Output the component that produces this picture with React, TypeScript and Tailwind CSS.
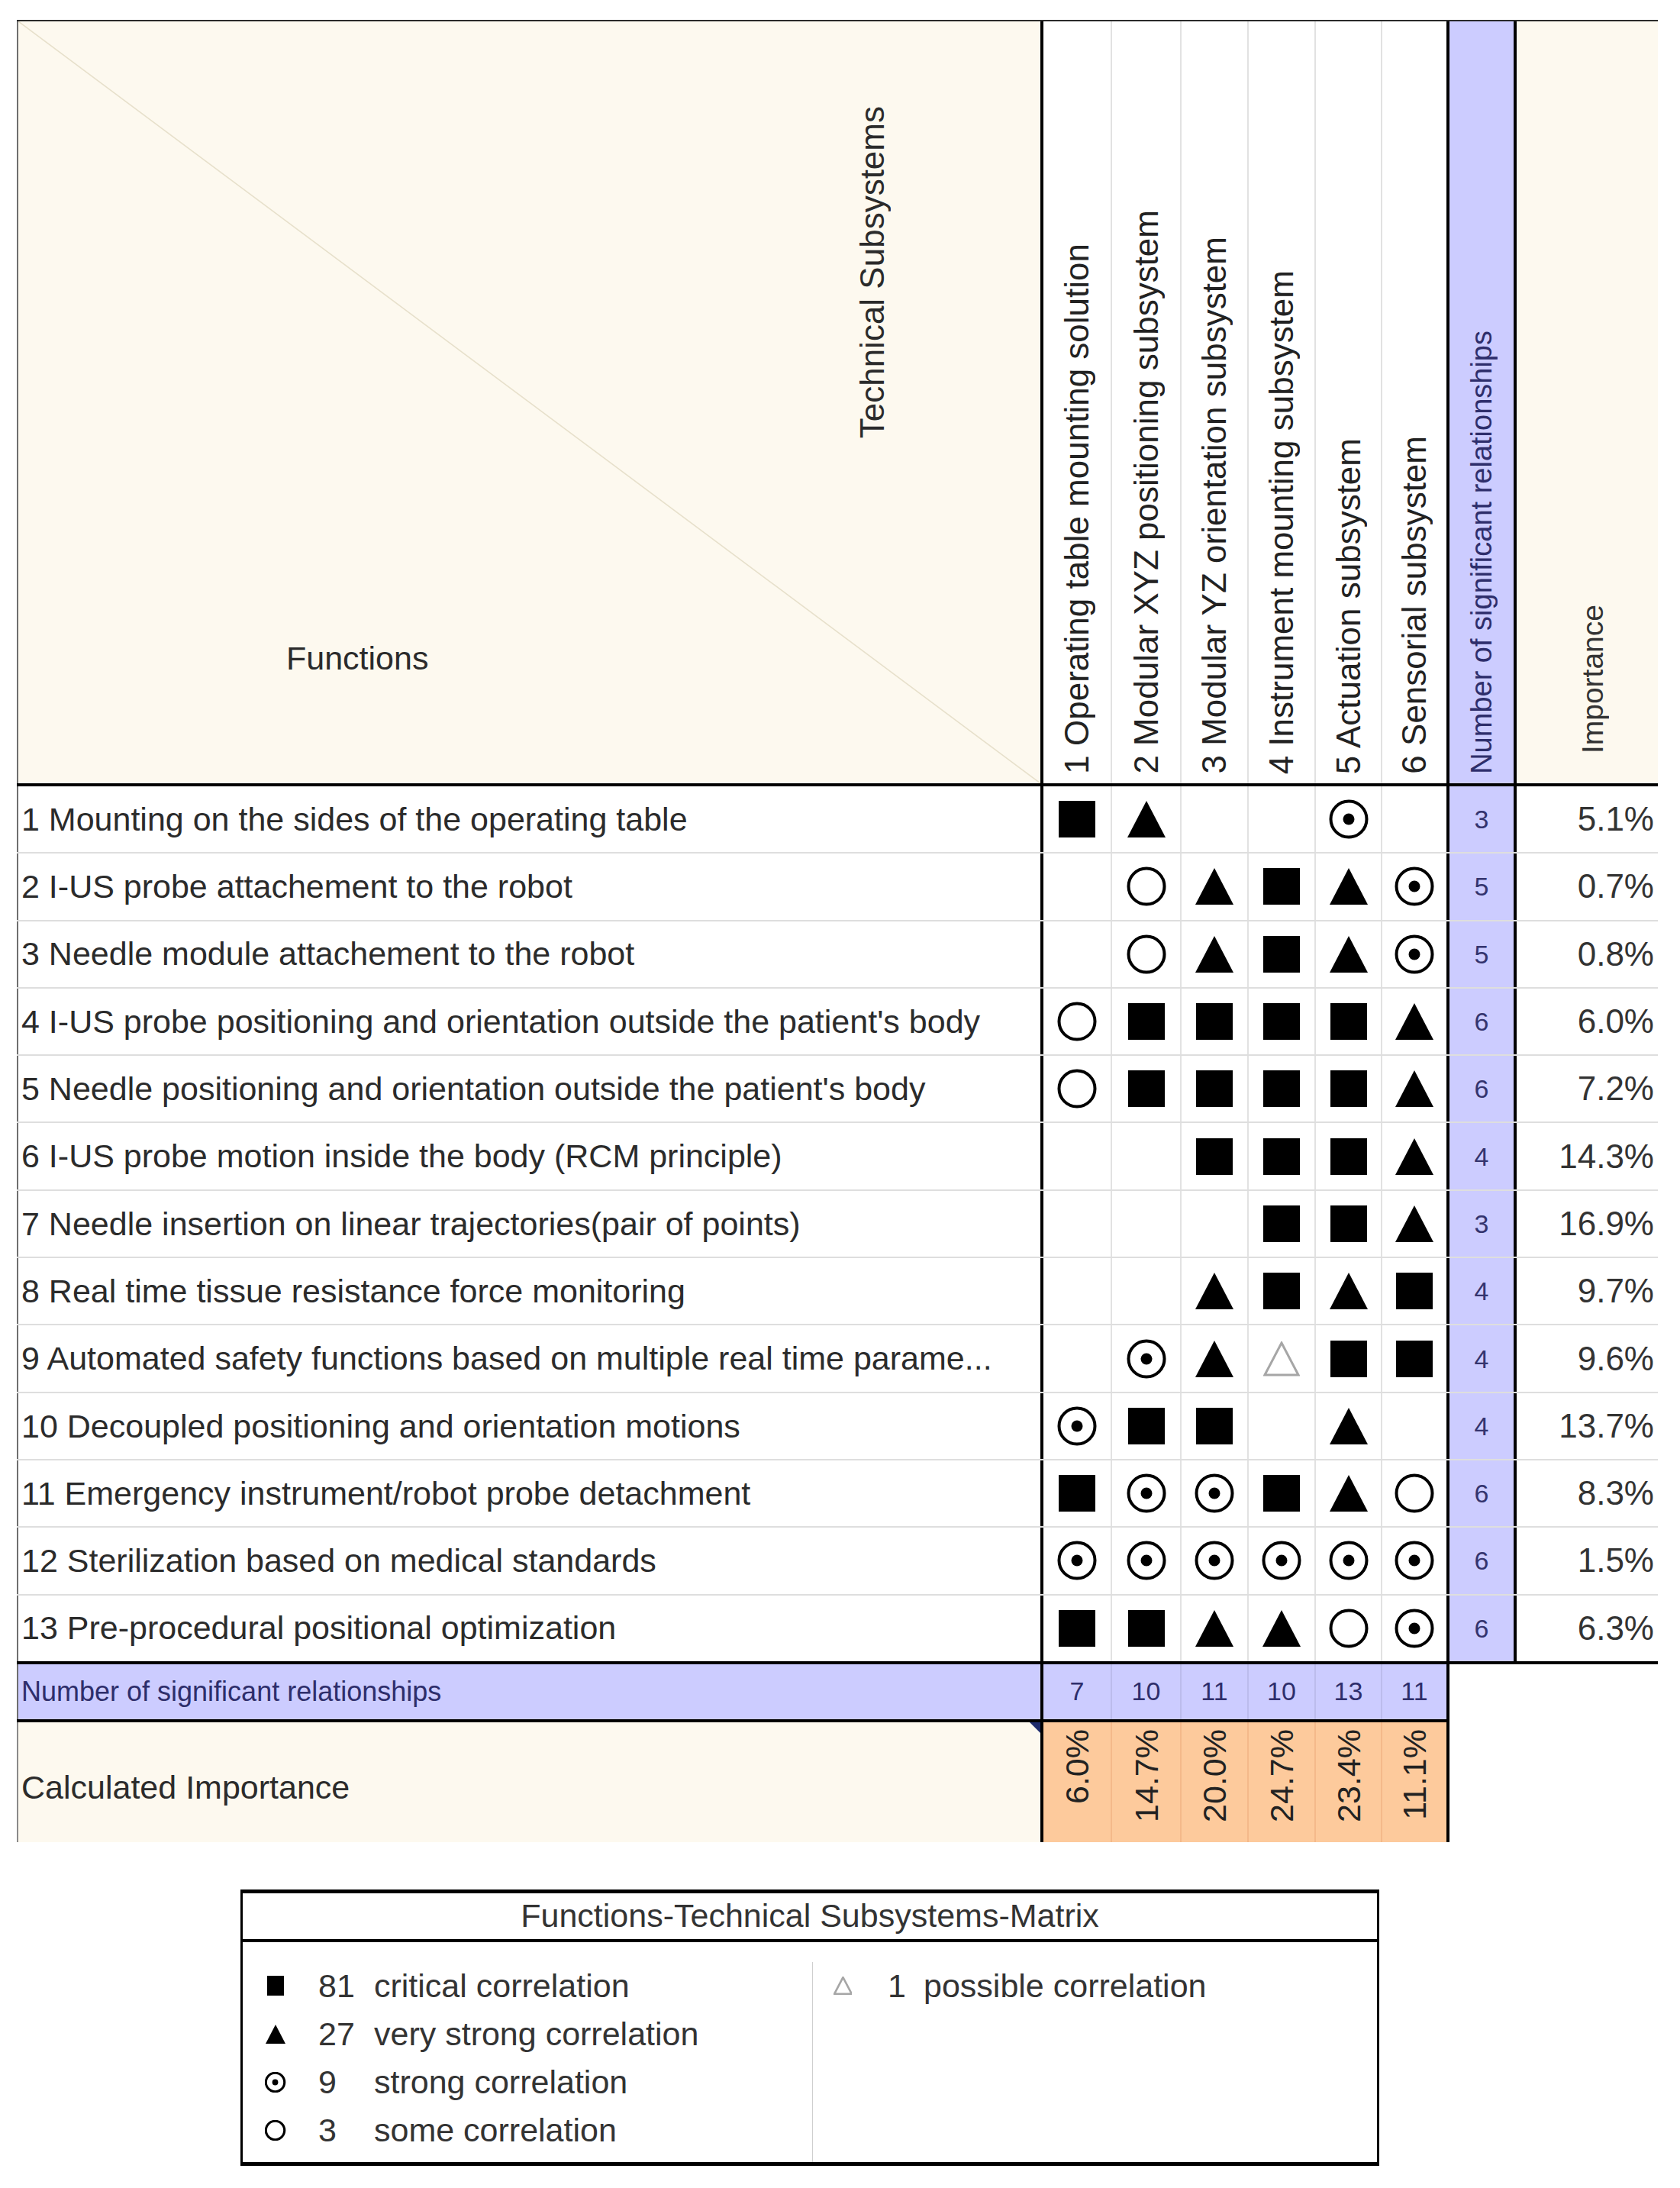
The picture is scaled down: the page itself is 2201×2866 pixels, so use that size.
import React from "react";

type Sym = "sq" | "tri" | "dot" | "ring" | "ptri" | "";

const rows: { label: string; cells: Sym[]; n: number; imp: string }[] = [
  { label: "1 Mounting on the sides of the operating table", cells: ["sq", "tri", "", "", "dot", ""], n: 3, imp: "5.1%" },
  { label: "2 I-US probe attachement to the robot", cells: ["", "ring", "tri", "sq", "tri", "dot"], n: 5, imp: "0.7%" },
  { label: "3 Needle module attachement to the robot", cells: ["", "ring", "tri", "sq", "tri", "dot"], n: 5, imp: "0.8%" },
  { label: "4 I-US probe positioning and orientation outside the patient's body", cells: ["ring", "sq", "sq", "sq", "sq", "tri"], n: 6, imp: "6.0%" },
  { label: "5 Needle positioning and orientation outside the patient's body", cells: ["ring", "sq", "sq", "sq", "sq", "tri"], n: 6, imp: "7.2%" },
  { label: "6 I-US probe motion inside the body (RCM principle)", cells: ["", "", "sq", "sq", "sq", "tri"], n: 4, imp: "14.3%" },
  { label: "7 Needle insertion on linear trajectories(pair of points)", cells: ["", "", "", "sq", "sq", "tri"], n: 3, imp: "16.9%" },
  { label: "8 Real time tissue resistance force monitoring", cells: ["", "", "tri", "sq", "tri", "sq"], n: 4, imp: "9.7%" },
  { label: "9 Automated safety functions based on multiple real time parame...", cells: ["", "dot", "tri", "ptri", "sq", "sq"], n: 4, imp: "9.6%" },
  { label: "10 Decoupled positioning and orientation motions", cells: ["dot", "sq", "sq", "", "tri", ""], n: 4, imp: "13.7%" },
  { label: "11 Emergency instrument/robot probe detachment", cells: ["sq", "dot", "dot", "sq", "tri", "ring"], n: 6, imp: "8.3%" },
  { label: "12 Sterilization based on medical standards", cells: ["dot", "dot", "dot", "dot", "dot", "dot"], n: 6, imp: "1.5%" },
  { label: "13 Pre-procedural positional optimization", cells: ["sq", "sq", "tri", "tri", "ring", "dot"], n: 6, imp: "6.3%" },
];

const subsystems = [
  "1 Operating table mounting solution",
  "2 Modular XYZ positioning subsystem",
  "3 Modular YZ orientation subsystem",
  "4 Instrument mounting subsystem",
  "5 Actuation subsystem",
  "6 Sensorial subsystem",
];

const totals = ["7", "10", "11", "10", "13", "11"];
const calculated = ["6.0%", "14.7%", "20.0%", "24.7%", "23.4%", "11.1%"];

// column widths incl. their left border
const gridCols = [
  "w-[92px] border-l-4 border-black",
  "w-[91px] border-l-2 border-[#e2e2e2]",
  "w-[88px] border-l-2 border-[#e2e2e2]",
  "w-[88px] border-l-2 border-[#e2e2e2]",
  "w-[87px] border-l-2 border-[#e2e2e2]",
  "w-[86px] border-l-2 border-[#e2e2e2]",
];
const blueCols = [
  "w-[92px] border-l-4 border-black",
  "w-[91px] border-l-2 border-[#bcbcec]",
  "w-[88px] border-l-2 border-[#bcbcec]",
  "w-[88px] border-l-2 border-[#bcbcec]",
  "w-[87px] border-l-2 border-[#bcbcec]",
  "w-[86px] border-l-2 border-[#bcbcec]",
];
const orangeCols = [
  "w-[92px] border-l-4 border-black",
  "w-[91px] border-l-2 border-[#f4b98a]",
  "w-[88px] border-l-2 border-[#f4b98a]",
  "w-[88px] border-l-2 border-[#f4b98a]",
  "w-[87px] border-l-2 border-[#f4b98a]",
  "w-[86px] border-l-2 border-[#f4b98a]",
];

const vertical = "[writing-mode:vertical-rl] rotate-180 whitespace-nowrap";

function Mark({ s, small }: { s: Sym; small?: boolean }) {
  const k = small ? 0.52 : 1;
  if (s === "sq") return <div className={small ? "w-[22px] h-[26px] bg-black" : "w-[48px] h-[48px] bg-black"} />;
  if (s === "tri")
    return (
      <svg width={50 * k} height={48 * k} viewBox="0 0 50 48">
        <polygon points="25,0 50,48 0,48" fill="#000" />
      </svg>
    );
  if (s === "dot")
    return (
      <svg width={52 * k} height={52 * k} viewBox="0 0 52 52">
        <circle cx="26" cy="26" r="23.5" fill="none" stroke="#000" strokeWidth={small ? 6 : 4} />
        <circle cx="26" cy="26" r="7.5" fill="#000" />
      </svg>
    );
  if (s === "ring")
    return (
      <svg width={52 * k} height={52 * k} viewBox="0 0 52 52">
        <circle cx="26" cy="26" r="23.5" fill="none" stroke="#000" strokeWidth={small ? 6 : 4} />
      </svg>
    );
  if (s === "ptri")
    return (
      <svg width={48 * k} height={46 * k} viewBox="0 0 48 46">
        <polygon points="24,2 46,44 2,44" fill="none" stroke="#a6a6a6" strokeWidth={small ? 5 : 3} />
      </svg>
    );
  return null;
}

function Legend() {
  const left: { s: Sym; n: string; t: string }[] = [
    { s: "sq", n: "81", t: "critical correlation" },
    { s: "tri", n: "27", t: "very strong correlation" },
    { s: "dot", n: "9", t: "strong correlation" },
    { s: "ring", n: "3", t: "some correlation" },
  ];
  return (
    <div className="ml-[315px] mt-[62px] w-[1492px] h-[362px] border-x-[3px] border-t-[5px] border-b-[5px] border-black flex flex-col text-[43px] text-[#333]">
      <div className="h-[64px] border-b-4 border-black flex items-center justify-center leading-none">
        Functions-Technical Subsystems-Matrix
      </div>
      <div className="flex flex-1">
        <div className="w-[746px] pt-[26px] pl-[29px]">
          {left.map((it) => (
            <div key={it.n} className="h-[63px] flex items-center leading-none">
              <div className="w-[28px] flex justify-center">
                <Mark s={it.s} small />
              </div>
              <div className="ml-[42px] w-[73px]">{it.n}</div>
              <div>{it.t}</div>
            </div>
          ))}
        </div>
        <div className="flex-1 mt-[26px] border-l border-[#cfcfcf] pl-[26px]">
          <div className="h-[63px] flex items-center leading-none">
            <div className="w-[26px] flex justify-center">
              <Mark s="ptri" small />
            </div>
            <div className="ml-[46px] w-[47px]">1</div>
            <div>possible correlation</div>
          </div>
        </div>
      </div>
    </div>
  );
}

export default function App() {
  return (
    <div className="w-[2201px] h-[2866px] bg-white pt-[26px] font-['Liberation_Sans',Arial,sans-serif] text-[#2b2b2b]">
      <div className="ml-[22px] w-[2150px]">
        {/* header */}
        <div className="flex h-[1004px] border-t-2 border-b-4 border-t-[#2a2a2a] border-b-black">
          <div className="relative w-[1341px] bg-[#fdf9ef] border-l-2 border-[#6f6f6f]">
            <svg className="absolute inset-0 w-full h-full" preserveAspectRatio="none" viewBox="0 0 100 100">
              <line x1="0" y1="0" x2="100" y2="100" stroke="#e7e0cb" strokeWidth="1.6" vectorEffect="non-scaling-stroke" />
            </svg>
            <span className={`absolute left-[1094px] top-[111px] text-[44px] leading-[50px] ${vertical}`}>
              Technical Subsystems
            </span>
            <span className="absolute left-[351px] top-[809px] text-[43px] leading-[50px]">Functions</span>
          </div>
          {subsystems.map((name, i) => (
            <div key={name} className={`${gridCols[i]} bg-white flex flex-col justify-end items-center pb-[12px]`}>
              <span className={`text-[44px] leading-[50px] text-[#222] ${vertical}`}>{name}</span>
            </div>
          ))}
          <div className="w-[88px] border-l-4 border-black bg-[#ccccff] flex flex-col justify-end items-center pb-[12px]">
            <span className={`text-[38px] leading-[44px] text-[#2e2e6b] ${vertical}`}>Number of significant relationships</span>
          </div>
          <div className="w-[189px] border-l-4 border-black bg-[#fdf9ef] flex flex-col justify-end items-center pb-[39px] pl-[14px]">
            <span className={`text-[39px] leading-[44px] text-[#333] ${vertical}`}>Importance</span>
          </div>
        </div>

        {/* matrix rows */}
        {rows.map((r, ri) => (
          <div
            key={r.label}
            className={
              ri === rows.length - 1
                ? "flex h-[90.3px] border-b-4 border-black"
                : "flex h-[88.3px] border-b-2 border-[#dedede]"
            }
          >
            <div className="w-[1341px] border-l-2 border-[#6f6f6f] pl-[4px] flex items-center text-[43px] whitespace-nowrap overflow-hidden">
              {r.label}
            </div>
            {r.cells.map((c, ci) => (
              <div key={ci} className={`${gridCols[ci]} flex items-center justify-center`}>
                <Mark s={c} />
              </div>
            ))}
            <div className="w-[88px] border-l-4 border-black bg-[#ccccff] flex items-center justify-center text-[34px] leading-none text-[#34346e]">
              {r.n}
            </div>
            <div className="w-[189px] border-l-4 border-black flex items-center justify-end pr-[5px] text-[44px] text-[#333]">
              {r.imp}
            </div>
          </div>
        ))}

        {/* totals */}
        <div className="flex w-[1877px] h-[76px] border-b-4 border-r-4 border-black bg-[#ccccff] text-[#2e2e6b]">
          <div className="w-[1341px] border-l-2 border-[#6f6f6f] pl-[4px] flex items-center text-[36px]">
            Number of significant relationships
          </div>
          {totals.map((t, i) => (
            <div key={i} className={`${blueCols[i]} flex items-center justify-center text-[34px]`}>
              {t}
            </div>
          ))}
        </div>

        {/* calculated importance */}
        <div className="flex w-[1877px] h-[157px] border-r-4 border-black">
          <div className="relative w-[1341px] bg-[#fdf9ef] border-l-2 border-[#8a8a8a] pl-[4px] pt-[14px] flex items-center text-[43px]">
            Calculated Importance
            <svg className="absolute right-0 top-0" width="14" height="14" viewBox="0 0 14 14">
              <polygon points="0,0 14,0 14,14" fill="#1d2a6b" />
            </svg>
          </div>
          {calculated.map((v, i) => (
            <div key={i} className={`${orangeCols[i]} bg-[#fdca9c] flex flex-col justify-start items-center pt-[9px]`}>
              <span className={`text-[43px] leading-[48px] text-[#222] ${vertical}`}>{v}</span>
            </div>
          ))}
        </div>
      </div>

      <Legend />
    </div>
  );
}
